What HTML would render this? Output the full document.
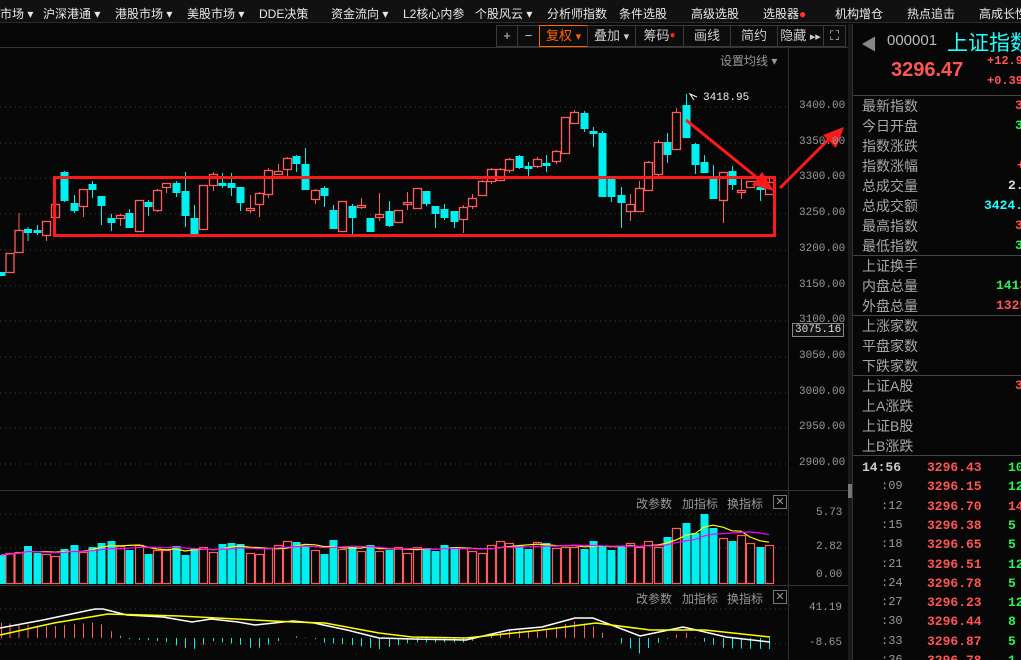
<!DOCTYPE html>
<html><head><meta charset="utf-8"><style>
*{margin:0;padding:0;box-sizing:border-box}
body{width:1021px;height:660px;background:#070707;overflow:hidden;position:relative;font-family:"Liberation Sans","Noto Sans CJK SC",sans-serif;color:#ccc}
.menu{position:absolute;left:0;top:0;width:1021px;height:23px;background:#111;border-bottom:1px solid #2a2a2a;font-size:12px;color:#e8e8e8;white-space:nowrap}
.menu span{position:absolute;top:5px}
.tb{position:absolute;top:25px;height:22px;border:1px solid #3a3a3a;font-size:13px;color:#ccc;text-align:center;line-height:20px;background:#0c0c0c}
.ax{position:absolute;font-family:"Liberation Mono",monospace;font-size:11px;color:#9a9a9a}
.rp{position:absolute;left:852px;top:24px;width:169px;height:636px;background:#070707;border-left:1px solid #333;overflow:hidden;white-space:nowrap}
.lab{position:absolute;left:9px;font-size:14px;color:#a8a8a8}
.val{position:absolute;font-family:"Liberation Mono",monospace;font-size:13px;font-weight:bold}
.hl{position:absolute;left:0;width:169px;height:1px;background:#444}
.tk{position:absolute;font-family:"Liberation Mono",monospace;font-size:13px}
.opt{position:absolute;font-size:12px;color:#999}
</style></head><body>
<div class="menu">
<span style="left:0">市场 ▾</span><span style="left:43px">沪深港通 ▾</span><span style="left:115px">港股市场 ▾</span><span style="left:187px">美股市场 ▾</span><span style="left:259px">DDE决策</span><span style="left:331px">资金流向 ▾</span><span style="left:403px">L2核心内参</span><span style="left:475px">个股风云 ▾</span><span style="left:547px">分析师指数</span><span style="left:619px">条件选股</span><span style="left:691px">高级选股</span><span style="left:763px">选股器<b style="color:#f33">●</b></span><span style="left:835px">机构增仓</span><span style="left:907px">热点追击</span><span style="left:979px">高成长性</span>
</div>
<div class="tb" style="left:496px;width:22px">+</div>
<div class="tb" style="left:517px;width:23px">−</div>
<div class="tb" style="left:539px;width:49px;border-color:#f60;color:#f60">复权 <small>▾</small></div>
<div class="tb" style="left:587px;width:49px">叠加 <small>▾</small></div>
<div class="tb" style="left:635px;width:49px">筹码<b style="color:#f22;font-size:10px;vertical-align:top">●</b></div>
<div class="tb" style="left:683px;width:48px">画线</div>
<div class="tb" style="left:730px;width:48px">简约</div>
<div class="tb" style="left:777px;width:47px">隐藏 <small>▸▸</small></div>
<div class="tb" style="left:823px;width:23px">⛶</div>
<div style="position:absolute;left:0;top:47px;width:850px;height:1px;background:#333"></div>
<div style="position:absolute;left:720px;top:52px;font-size:12px;color:#999">设置均线 ▾</div>

<svg id="ch" style="position:absolute;left:0;top:0" width="852" height="660"></svg>

<div class="ax" style="left:799px;top:100px">3400.00</div>
<div class="ax" style="left:799px;top:136px">3350.00</div>
<div class="ax" style="left:799px;top:171px">3300.00</div>
<div class="ax" style="left:799px;top:207px">3250.00</div>
<div class="ax" style="left:799px;top:243px">3200.00</div>
<div class="ax" style="left:799px;top:279px">3150.00</div>
<div class="ax" style="left:799px;top:314px">3100.00</div>
<div class="ax" style="left:799px;top:350px">3050.00</div>
<div class="ax" style="left:799px;top:386px">3000.00</div>
<div class="ax" style="left:799px;top:421px">2950.00</div>
<div class="ax" style="left:799px;top:457px">2900.00</div>
<div class="ax" style="left:792px;top:323px;border:1px solid #888;background:#111;color:#ddd;padding:0 2px">3075.16</div>
<div class="ax" style="left:703px;top:92px;color:#eee">3418.95</div>
<div class="opt" style="left:636px;top:495px">改参数</div><div class="opt" style="left:682px;top:495px">加指标</div><div class="opt" style="left:727px;top:495px">换指标</div>
<div class="opt" style="left:773px;top:495px;border:1px solid #777;width:14px;height:14px;line-height:12px;text-align:center;font-size:11px">✕</div>
<div class="opt" style="left:636px;top:590px">改参数</div><div class="opt" style="left:682px;top:590px">加指标</div><div class="opt" style="left:727px;top:590px">换指标</div>
<div class="opt" style="left:773px;top:590px;border:1px solid #777;width:14px;height:14px;line-height:12px;text-align:center;font-size:11px">✕</div>
<div class="ax" style="left:816px;top:507px">5.73</div>
<div class="ax" style="left:816px;top:541px">2.82</div>
<div class="ax" style="left:816px;top:569px">0.00</div>
<div class="ax" style="left:809px;top:602px">41.19</div>
<div class="ax" style="left:809px;top:637px">-8.65</div>

<div class="rp">
<div style="position:absolute;left:8px;top:7px;color:#888;font-size:16px">◀</div>
<div style="position:absolute;left:34px;top:8px;color:#bbb;font-size:15px">000001</div>
<div style="position:absolute;left:94px;top:3px;color:#2ff;font-size:21px;white-space:nowrap">上证指数</div>
<div style="position:absolute;left:38px;top:35px;color:#f55;font-size:20px;font-weight:bold">3296.47</div>
<div class="val" style="left:134px;top:30px;color:#f55;font-size:12px">+12.95</div>
<div class="val" style="left:134px;top:50px;color:#f55;font-size:12px">+0.39%</div>
<div class="hl" style="top:71px"></div>
<div class="lab" style="top:72px">最新指数</div><div class="val" style="left:162px;top:74px;color:#f55">3</div>
<div class="lab" style="top:92px">今日开盘</div><div class="val" style="left:162px;top:94px;color:#3e5">3</div>
<div class="lab" style="top:112px">指数涨跌</div>
<div class="lab" style="top:132px">指数涨幅</div><div class="val" style="left:164px;top:134px;color:#f55">+</div>
<div class="lab" style="top:152px">总成交量</div><div class="val" style="left:155px;top:154px;color:#ddd">2.7</div>
<div class="lab" style="top:172px">总成交额</div><div class="val" style="left:131px;top:174px;color:#2ff">3424.4</div>
<div class="lab" style="top:192px">最高指数</div><div class="val" style="left:162px;top:194px;color:#f55">3</div>
<div class="lab" style="top:212px">最低指数</div><div class="val" style="left:162px;top:214px;color:#3e5">3</div>
<div class="hl" style="top:231px"></div>
<div class="lab" style="top:232px">上证换手</div>
<div class="lab" style="top:252px">内盘总量</div><div class="val" style="left:143px;top:254px;color:#3e5">1413</div>
<div class="lab" style="top:272px">外盘总量</div><div class="val" style="left:143px;top:274px;color:#f55">1325</div>
<div class="hl" style="top:291px"></div>
<div class="lab" style="top:292px">上涨家数</div>
<div class="lab" style="top:312px">平盘家数</div>
<div class="lab" style="top:332px">下跌家数</div>
<div class="hl" style="top:351px"></div>
<div class="lab" style="top:352px">上证A股</div><div class="val" style="left:162px;top:354px;color:#f55">3</div>
<div class="lab" style="top:372px">上A涨跌</div>
<div class="lab" style="top:392px">上证B股</div>
<div class="lab" style="top:412px">上B涨跌</div>
<div class="hl" style="top:431px"></div>
<div id="ticks"></div>
</div>
<div style="position:absolute;left:848px;top:24px;width:4px;height:636px;background:#1a1a1a"></div>
<div style="position:absolute;left:848px;top:484px;width:4px;height:14px;background:#777"></div>

<script>
var svg=document.getElementById('ch'),h='';
var R='#ff5c5c',C='#00f0f0';
[107,143,178,214,250,286,321,357,393,428,464].forEach(function(y){h+='<line x1="0" y1="'+y+'" x2="786" y2="'+y+'" stroke="#444" stroke-dasharray="1,4"/>';});
h+='<line x1="788.5" y1="48" x2="788.5" y2="660" stroke="#333"/>';
h+='<line x1="0" y1="490.5" x2="848" y2="490.5" stroke="#333"/><line x1="0" y1="585.5" x2="848" y2="585.5" stroke="#333"/>';
[514,548].forEach(function(y){h+='<line x1="0" y1="'+y+'" x2="786" y2="'+y+'" stroke="#444" stroke-dasharray="1,4"/>';});
[609,644].forEach(function(y){h+='<line x1="0" y1="'+y+'" x2="786" y2="'+y+'" stroke="#444" stroke-dasharray="1,4"/>';});
var K=[[1,272,275,272,275,0],[9.5,253,272,253,273,1],[18.5,230,252,213,252,1],[27.5,229,232,227,241,0],[37,230,232,225,235,0],[46,221,235,221,241,1],[55,204,217,204,217,1],[64,172,200,171,202,0],[74,203,210,195,213,0],[83,189,206,189,217,1],[92,184,189,181,198,0],[101,196,205,196,225,0],[111,218,222,214,231,0],[120,215,218,214,226,1],[129,213,227,209,228,0],[139,200,231,200,231,1],[148,202,206,200,216,0],[157,190,210,189,212,1],[166,183,187,183,193,1],[176,183,192,181,197,0],[185,191,215,172,227,0],[194,218,233,205,233,0],[203,185,229,185,230,1],[213,174,185,172,191,1],[222,183,185,173,188,0],[231,183,187,173,196,0],[240,187,202,187,211,0],[250,208,210,195,213,1],[259,193,204,192,217,1],[268,170,194,168,198,1],[278,171,174,164,174,1],[287,158,169,157,176,1],[296,156,163,155,172,0],[305,164,189,148,190,0],[315,190,199,189,204,1],[324,188,195,186,207,0],[333,210,228,205,228,0],[342,201,231,201,231,1],[352,206,217,204,237,0],[361,205,207,198,209,1],[370,218,231,218,231,0],[379,214,217,193,221,1],[389,211,225,201,227,0],[398,210,222,210,223,1],[407,202,204,192,210,1],[417,188,208,188,208,1],[426,191,203,191,206,0],[435,206,213,206,228,0],[444,209,217,204,220,0],[454,211,221,211,228,0],[463,207,219,205,233,1],[472,198,206,194,209,1],[482,181,195,180,195,1],[491,169,181,168,184,1],[500,169,180,168,181,1],[509,159,170,158,173,1],[519,156,167,155,169,0],[528,166,168,162,179,0],[537,159,166,157,168,1],[546,163,165,155,172,0],[556,151,161,150,164,1],[565,117,153,117,153,1],[574,112,123,110,124,1],[584,113,128,111,132,0],[593,131,133,127,147,0],[602,133,196,131,196,0],[611,179,196,179,202,0],[621,195,202,187,228,0],[630,204,211,194,221,1],[639,188,211,181,212,1],[648,162,190,161,191,1],[658,142,174,140,176,1],[667,142,154,133,163,0],[676,112,149,108,150,1],[686,105,137,94,138,0],[695,144,164,143,174,0],[704,162,172,155,173,0],[713,176,198,165,198,0],[723,172,200,172,223,1],[732,171,184,166,190,0],[741,190,192,179,199,1],[750,181,187,181,188,1],[760,187,189,181,201,0],[769,182,194,176,195,1]];
var vols=[28,30,31,37,30,29,27,34,38,31,36,40,42,37,33,38,29,33,33,37,28,35,36,31,39,40,39,30,29,35,38,42,41,37,33,29,43,34,36,32,38,32,33,36,30,36,35,32,38,36,35,32,30,38,42,40,37,34,41,40,35,36,36,34,42,37,33,36,40,36,34,44,39,42,50,52,45,69,55,46,44,46,36,37,34,38,35,37,33,36];
var vx=[],vm=[];
K.forEach(function(k,i){
 var c=k[5]?R:C,x=k[0];
 h+='<line x1="'+(x+.5)+'" y1="'+k[3]+'" x2="'+(x+.5)+'" y2="'+k[4]+'" stroke="'+c+'"/>';
 var bh=Math.max(k[2]-k[1],1);
 if(k[5])h+='<rect x="'+(x-3.5)+'" y="'+(k[1]+.5)+'" width="8" height="'+bh+'" fill="#070707" stroke="'+c+'" stroke-width="1.3"/>';
 else h+='<rect x="'+(x-3.5)+'" y="'+k[1]+'" width="8" height="'+(bh+1)+'" fill="'+c+'"/>';
 var v=vols[i%vols.length];
 if(i>=K.length-14){v=[42,36,46,55,60,50,69,55,45,42,48,40,36,38][i-(K.length-14)]||v;}
 if(k[5])h+='<rect x="'+(x-3.5)+'" y="'+(583-v+.5)+'" width="8" height="'+v+'" fill="none" stroke="'+R+'" stroke-width="1.2"/>';
 else h+='<rect x="'+(x-3.5)+'" y="'+(583-v)+'" width="8" height="'+(v+1)+'" fill="'+C+'"/>';
 vm.push(v);vx.push(x);
});
function ma(n,col){var p=[];for(var i=0;i<vm.length;i++){var s=0,c=0;for(var j=Math.max(0,i-n+1);j<=i;j++){s+=vm[j];c++;}p.push(vx[i]+','+(583-s/c).toFixed(1));}h+='<polyline points="'+p.join(' ')+'" fill="none" stroke="'+col+'" stroke-width="1.2"/>';}
ma(5,'#ff0');ma(10,'#f0f');
var W=[[0,628],[43,620],[95,609],[103,609],[127,615],[163,617],[192,622],[211,619],[238,622],[255,625],[293,621],[314,623],[347,630],[379,638],[412,639],[466,640],[509,630],[542,627],[575,618],[593,618],[640,636],[683,627],[705,632],[726,637],[770,642]];
var Y=[[0,635],[54,623],[108,614],[179,616],[217,618],[293,622],[325,623],[379,633],[412,637],[466,638],[542,630],[596,623],[650,630],[705,630],[770,637]];
function it(a,x){for(var i=1;i<a.length;i++){if(x<=a[i][0]){var t=(x-a[i-1][0])/(a[i][0]-a[i-1][0]);return a[i-1][1]+t*(a[i][1]-a[i-1][1]);}}return a[a.length-1][1];}
K.forEach(function(k){var d=(it(Y,k[0])-it(W,k[0]))*2.2;var x=k[0]+.5;
 h+='<line x1="'+x+'" y1="638" x2="'+x+'" y2="'+(638-d)+'" stroke="'+(d>0?R:C)+'"/>';});
h+='<polyline points="'+W.map(function(p){return p.join(',')}).join(' ')+'" fill="none" stroke="#fff" stroke-width="1.5"/>';
h+='<polyline points="'+Y.map(function(p){return p.join(',')}).join(' ')+'" fill="none" stroke="#ff0" stroke-width="1.5"/>';
h+='<rect x="54.5" y="177.5" width="720" height="58" fill="none" stroke="#ff1a1a" stroke-width="3"/>';
h+='<line x1="686" y1="120" x2="760" y2="180" stroke="#ff1a1a" stroke-width="3"/><polygon points="774,191 752,185 762,172" fill="#ff1a1a"/>';
h+='<line x1="780" y1="188" x2="830" y2="138" stroke="#ff1a1a" stroke-width="3"/><polygon points="844,127 836,148 823,135" fill="#ff1a1a"/>';
h+='<polyline points="697,97 690,94 694,100" fill="none" stroke="#fff"/>';
svg.innerHTML=h;
var T=[['14:56','3296.43','10',1,0],[':09','3296.15','12',0,0],[':12','3296.70','14',0,1],[':15','3296.38','5',0,0],[':18','3296.65','5',0,0],[':21','3296.51','12',0,0],[':24','3296.78','5',0,0],[':27','3296.23','12',0,0],[':30','3296.44','8',0,0],[':33','3296.87','5',0,0],[':36','3296.78','1',0,0]];
var t='';T.forEach(function(r,i){var y=436+i*19.3;
 t+='<div class="tk" style="left:'+(r[3]?9:28)+'px;top:'+y+'px;color:'+(r[3]?'#ccc':'#999')+';'+(r[3]?'font-weight:bold;':'font-size:12px')+'">'+r[0]+'</div>';
 t+='<div class="tk" style="left:74px;top:'+y+'px;color:#f55;font-weight:bold">'+r[1]+'</div>';
 t+='<div class="tk" style="left:155px;top:'+y+'px;color:'+(r[4]?'#f55':'#3e5')+';font-weight:bold">'+r[2]+'</div>';});
document.getElementById('ticks').innerHTML=t;
</script>
</body></html>
